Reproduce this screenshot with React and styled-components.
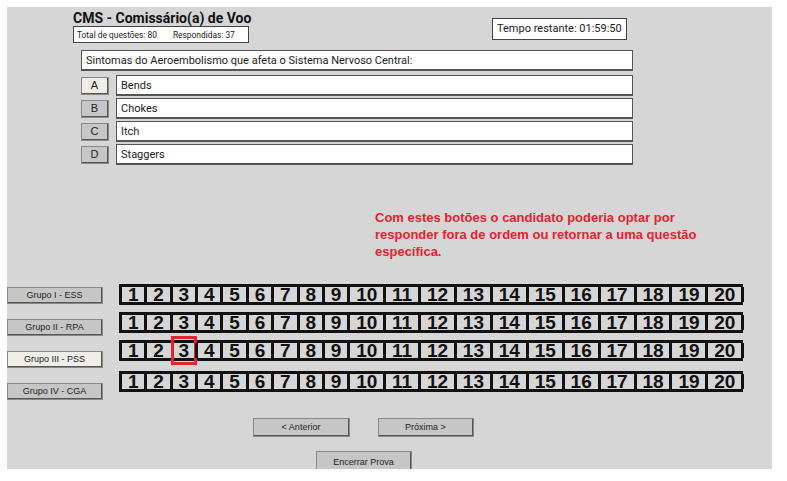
import styled, { createGlobalStyle } from 'styled-components'

const Global = createGlobalStyle`
  body {
    margin: 0;
    background: #fff;
    font-family: Roboto, "Liberation Sans", sans-serif;
  }
`

const Panel = styled.div`
  margin: 7px;
  width: 765px;
  height: 462px;
  background: #d6d6d6;
  overflow: hidden;
  display: flex;
  flex-direction: column;
`

const Header = styled.div`
  display: flex;
  margin: 3px 0 0 66px;
`

const TitleBlock = styled.div`
  display: flex;
  flex-direction: column;
  width: 176px;
`

const Title = styled.strong`
  font-size: 14px;
  line-height: 16px;
  white-space: nowrap;
  color: #111;
`

const Stats = styled.div`
  height: 15px;
  border: 1px solid #444;
  background: #fff;
  display: flex;
  align-items: center;
  gap: 16px;
  padding-left: 3px;
  font-size: 8.4px;
  color: #222;
`

const Timer = styled.div`
  margin: 8px 0 0 243px;
  height: 20px;
  padding: 0 4px;
  border: 1px solid #444;
  background: #fff;
  font-size: 11px;
  line-height: 20px;
  color: #222;
`

const Quiz = styled.div`
  margin: 7px 0 0 74px;
  width: 552px;
  display: flex;
  flex-direction: column;
  gap: 2px;
`

const Box = styled.div`
  box-sizing: border-box;
  flex: 1;
  height: 21px;
  border: 1px solid #555;
  border-bottom-width: 2px;
  background: #fff;
  padding-left: 4px;
  font-size: 11px;
  line-height: 19px;
  color: #222;
`

const Question = styled(Box)`
  flex: none;
  margin-bottom: 2px;
`

const OptionRow = styled.div`
  display: flex;
  align-items: center;
  gap: 7px;
`

const Bevel = styled.button`
  box-sizing: border-box;
  padding: 0;
  border: 1px solid #fafafa;
  border-right: 2px solid #555;
  border-bottom: 2px solid #555;
  outline: 1px solid #888;
  outline-offset: -1px;
  background: ${p => (p.$active ? '#efeee8' : '#c6c6c6')};
  color: #222;
  font-family: "Liberation Sans", Arial, sans-serif;
  cursor: pointer;
`

const Letter = styled(Bevel)`
  width: 28px;
  height: 18px;
  font-size: 11px;
`

const Note = styled.p`
  margin: 44px 0 0 368px;
  width: 360px;
  font-family: "Liberation Sans", Arial, sans-serif;
  font-weight: bold;
  font-size: 13px;
  line-height: 17px;
  color: #e42230;
`

const Groups = styled.div`
  display: flex;
  margin-top: 24px;
`

const GroupCol = styled.div`
  display: flex;
  flex-direction: column;
  gap: 15px;
  padding-top: 3px;
  width: 112px;
`

const GroupButton = styled(Bevel)`
  width: 96px;
  height: 17px;
  font-size: 9px;
`

const BarCol = styled.div`
  display: flex;
  flex-direction: column;
  gap: 7px;
`

const Bar = styled.div`
  display: flex;
  width: 624px;
  height: 15px;
  margin-top: ${p => p.$extra || 0}px;
  border-top: 3px solid #111;
  border-bottom: 3px solid #111;
`

const Cell = styled.span`
  position: relative;
  padding: 0 5.9px;
  border-left: 3px solid ${p => (p.$marked ? 'transparent' : '#111')};
  font-family: "Liberation Sans", Arial, sans-serif;
  font-weight: bold;
  font-size: 19px;
  line-height: 16px;
  color: #111;
  &:last-child {
    border-right: 3px solid #111;
  }
  ${p =>
    p.$marked &&
    `
    &::after {
      content: '';
      position: absolute;
      top: -7px;
      bottom: -7px;
      left: -2px;
      right: -2px;
      border: 3px solid #e42230;
    }
  `}
`

const Nav = styled.div`
  display: flex;
  gap: 28px;
  margin: 18px 0 0 246px;
`

const NavButton = styled(Bevel)`
  flex: none;
  width: ${p => p.$w || 96}px;
  height: ${p => p.$h || 19}px;
  font-size: 9px;
`

const Finish = styled.div`
  display: flex;
  margin: 14px 0 0 309px;
`

const numbers = Array.from({ length: 20 }, (_, i) => i + 1)
const groups = ['Grupo I - ESS', 'Grupo II - RPA', 'Grupo III - PSS', 'Grupo IV - CGA']
const options = [
  ['A', 'Bends'],
  ['B', 'Chokes'],
  ['C', 'Itch'],
  ['D', 'Staggers'],
]

const App = () => {
  return (
    <>
      <Global />
      <Panel>
        <Header>
          <TitleBlock>
            <Title>CMS - Comissário(a) de Voo</Title>
            <Stats>
              <span>Total de questões: 80</span>
              <span>Respondidas: 37</span>
            </Stats>
          </TitleBlock>
          <Timer>Tempo restante: 01:59:50</Timer>
        </Header>

        <Quiz>
          <Question>Sintomas do Aeroembolismo que afeta o Sistema Nervoso Central:</Question>
          {options.map(([l, t], i) => (
            <OptionRow key={l}>
              <Letter $active={i === 0}>{l}</Letter>
              <Box>{t}</Box>
            </OptionRow>
          ))}
        </Quiz>

        <Note>
          Com estes botões o candidato poderia optar por responder fora de ordem ou retornar a uma
          questão específica.
        </Note>

        <Groups>
          <GroupCol>
            {groups.map((g, i) => (
              <GroupButton key={g} $active={i === 2}>
                {g}
              </GroupButton>
            ))}
          </GroupCol>
          <BarCol>
            {groups.map((g, r) => (
              <Bar key={g} $extra={r === 3 ? 3 : 0}>
                {numbers.map(n => (
                  <Cell key={n} $marked={r === 2 && n === 3}>
                    {n}
                  </Cell>
                ))}
              </Bar>
            ))}
          </BarCol>
        </Groups>

        <Nav>
          <NavButton $w={97}>&lt; Anterior</NavButton>
          <NavButton>Próxima &gt;</NavButton>
        </Nav>
        <Finish>
          <NavButton $h={22}>Encerrar Prova</NavButton>
        </Finish>
      </Panel>
    </>
  )
}

export default App
